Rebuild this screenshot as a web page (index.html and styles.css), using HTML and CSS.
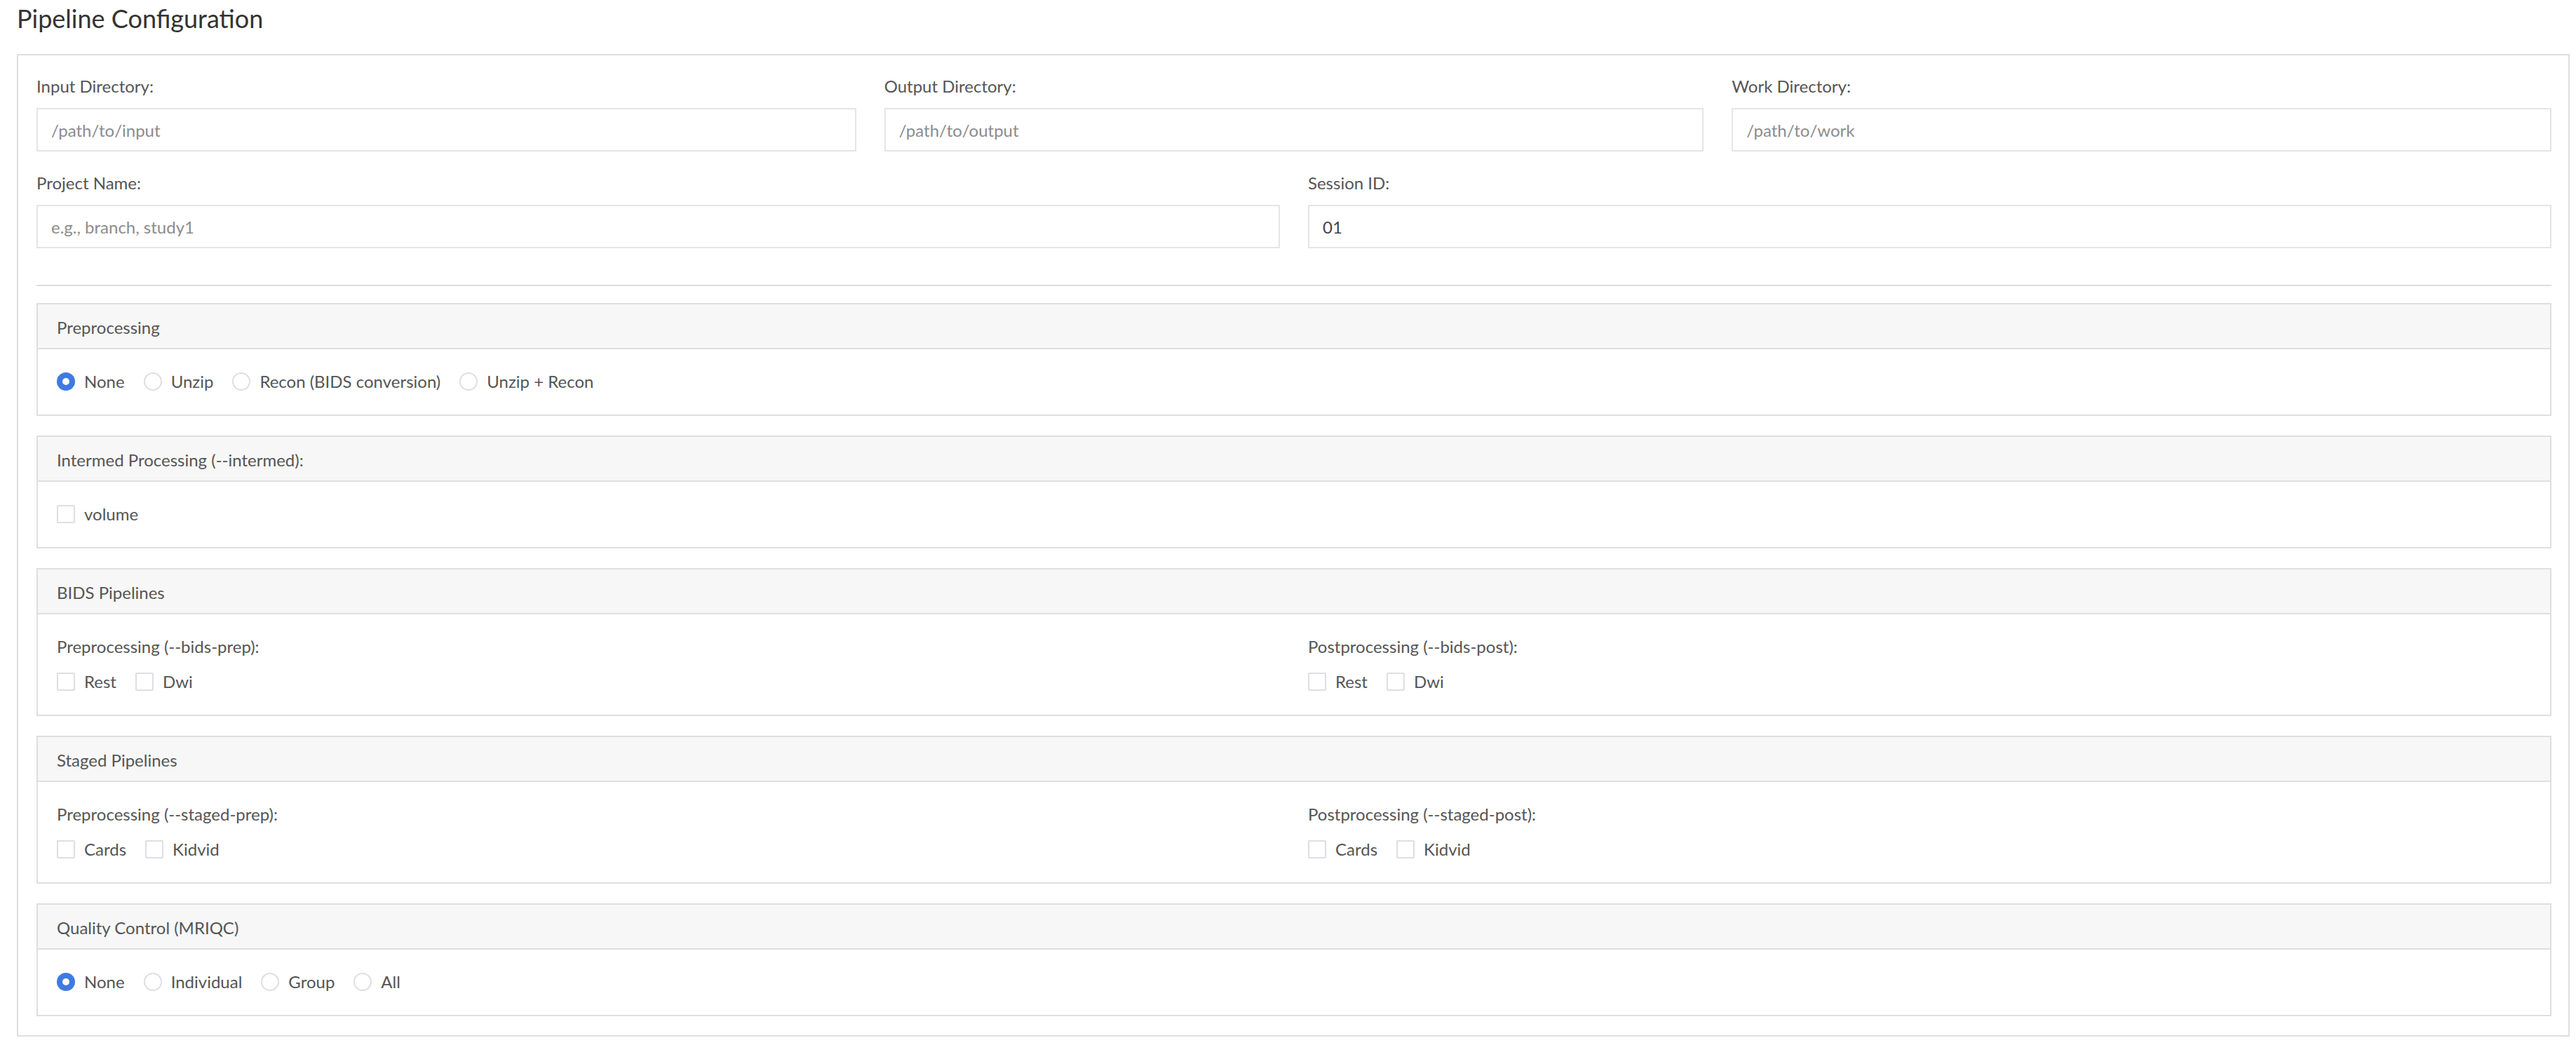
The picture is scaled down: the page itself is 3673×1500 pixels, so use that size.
FILE: index.html
```html
<!DOCTYPE html>
<html lang="en">

<head>
    <meta charset="UTF-8">
    <meta name="viewport" content="width=device-width, initial-scale=1.0">
    <title>Pipeline Configuration</title>
    <link rel="stylesheet" href="styles.css">
</head>

<body>
    <h1 class="page-title">Pipeline Configuration</h1>
    <div class="config-box">
        <div class="field-row cols-3">
            <div class="form-group">
                <label for="input-dir">Input Directory:</label>
                <input type="text" id="input-dir" placeholder="/path/to/input">
            </div>
            <div class="form-group">
                <label for="output-dir">Output Directory:</label>
                <input type="text" id="output-dir" placeholder="/path/to/output">
            </div>
            <div class="form-group">
                <label for="work-dir">Work Directory:</label>
                <input type="text" id="work-dir" placeholder="/path/to/work">
            </div>
        </div>
        <div class="field-row cols-2">
            <div class="form-group">
                <label for="project-name">Project Name:</label>
                <input type="text" id="project-name" placeholder="e.g., branch, study1">
            </div>
            <div class="form-group">
                <label for="session-id">Session ID:</label>
                <input type="text" id="session-id" value="01">
            </div>
        </div>

        <hr class="divider">

        <div class="panel">
            <div class="panel-heading">Preprocessing</div>
            <div class="panel-body">
                <div class="choice-list">
                    <label class="choice"><input type="radio" name="prep" checked>None</label>
                    <label class="choice"><input type="radio" name="prep">Unzip</label>
                    <label class="choice"><input type="radio" name="prep">Recon (BIDS conversion)</label>
                    <label class="choice"><input type="radio" name="prep">Unzip + Recon</label>
                </div>
            </div>
        </div>

        <div class="panel">
            <div class="panel-heading">Intermed Processing (--intermed):</div>
            <div class="panel-body">
                <div class="choice-list">
                    <label class="choice"><input type="checkbox" name="intermed">volume</label>
                </div>
            </div>
        </div>

        <div class="panel">
            <div class="panel-heading">BIDS Pipelines</div>
            <div class="panel-body cols-2">
                <div>
                    <div class="sub-label">Preprocessing (--bids-prep):</div>
                    <div class="choice-list">
                        <label class="choice"><input type="checkbox" name="bids-prep">Rest</label>
                        <label class="choice"><input type="checkbox" name="bids-prep">Dwi</label>
                    </div>
                </div>
                <div>
                    <div class="sub-label">Postprocessing (--bids-post):</div>
                    <div class="choice-list">
                        <label class="choice"><input type="checkbox" name="bids-post">Rest</label>
                        <label class="choice"><input type="checkbox" name="bids-post">Dwi</label>
                    </div>
                </div>
            </div>
        </div>

        <div class="panel">
            <div class="panel-heading">Staged Pipelines</div>
            <div class="panel-body cols-2">
                <div>
                    <div class="sub-label">Preprocessing (--staged-prep):</div>
                    <div class="choice-list">
                        <label class="choice"><input type="checkbox" name="staged-prep">Cards</label>
                        <label class="choice"><input type="checkbox" name="staged-prep">Kidvid</label>
                    </div>
                </div>
                <div>
                    <div class="sub-label">Postprocessing (--staged-post):</div>
                    <div class="choice-list">
                        <label class="choice"><input type="checkbox" name="staged-post">Cards</label>
                        <label class="choice"><input type="checkbox" name="staged-post">Kidvid</label>
                    </div>
                </div>
            </div>
        </div>

        <div class="panel">
            <div class="panel-heading">Quality Control (MRIQC)</div>
            <div class="panel-body">
                <div class="choice-list">
                    <label class="choice"><input type="radio" name="qc" checked>None</label>
                    <label class="choice"><input type="radio" name="qc">Individual</label>
                    <label class="choice"><input type="radio" name="qc">Group</label>
                    <label class="choice"><input type="radio" name="qc">All</label>
                </div>
            </div>
        </div>
    </div>
</body>

</html>
```

FILE: styles.css
```css
body {
    margin: 0;
    padding: 0;
    background-color: #ffffff;
    font-family: 'Lato', 'Liberation Sans', sans-serif;
    color: #555555;
}

.page-title {
    margin: 6px 0 31px 24px;
    font-size: 36px;
    line-height: 40px;
    font-weight: normal;
    color: #333333;
}

.config-box {
    margin: 0 9px 0 24px;
    padding: 29px 24px 27px 26px;
    border: 2px solid #dedede;
}

.field-row {
    display: grid;
    column-gap: 40px;
    margin-bottom: 30px;
}

.cols-3 {
    grid-template-columns: repeat(3, 1fr);
}

.cols-2 {
    display: grid;
    grid-template-columns: repeat(2, 1fr);
    column-gap: 40px;
}

.field-row.cols-2 {
    margin-bottom: 0;
}

.form-group label {
    display: block;
    font-size: 24px;
    line-height: 30px;
    margin-bottom: 16px;
    color: #555555;
}

.form-group input {
    display: block;
    box-sizing: border-box;
    width: 100%;
    height: 62px;
    padding: 0 19px;
    border: 2px solid #e4e4ea;
    border-radius: 0;
    font-family: inherit;
    font-size: 24px;
    color: #444444;
    background-color: #ffffff;
}

.form-group input::placeholder {
    color: #8c8c8c;
}

.divider {
    margin: 52px 0 24px 0;
    border: none;
    border-top: 2px solid #dddddd;
}

.panel {
    border: 2px solid #dfdfdf;
    margin-bottom: 28px;
}

.panel:last-child {
    margin-bottom: 0;
}

.panel-heading {
    padding: 18px 27px 14px 27px;
    font-size: 24px;
    line-height: 30px;
    color: #555555;
    background-color: #f7f7f7;
    border-bottom: 2px solid #dfdfdf;
}

.panel-body {
    padding: 31px 27px 32px 27px;
}

.sub-label {
    font-size: 24px;
    line-height: 30px;
    margin-bottom: 20px;
}

.choice-list {
    display: flex;
    align-items: center;
    gap: 27px;
}

.choice {
    display: inline-flex;
    align-items: center;
    gap: 13px;
    font-size: 24px;
    line-height: 30px;
    color: #555555;
}

.choice input {
    appearance: none;
    -webkit-appearance: none;
    box-sizing: border-box;
    width: 26px;
    height: 26px;
    margin: 0;
    border: 2px solid #dedee4;
    background-color: #ffffff;
}

.choice input[type="radio"] {
    border-radius: 50%;
}

.choice input[type="checkbox"] {
    border-radius: 2px;
}

.choice input[type="radio"]:checked {
    border: 8px solid #3f7be0;
}
```
